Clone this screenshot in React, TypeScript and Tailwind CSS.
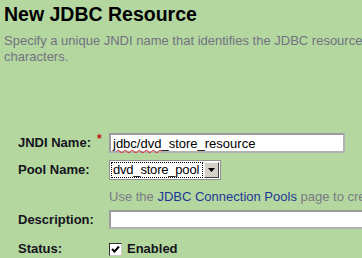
import React from 'react';

const font = { fontFamily: '"Liberation Sans", Arial, sans-serif' };

const Label = ({ children, required }: { children: React.ReactNode; required?: boolean }) => (
  <div className="relative w-[91px] shrink-0 text-[13px] font-bold text-[#14141c]">
    {children}
    {required && (
      <span className="absolute left-[79px] top-[-3px] text-[12px] font-bold text-[#c41010]">*</span>
    )}
  </div>
);

const NewJdbcResource = () => {
  return (
    <div className="w-[362px] h-[258px] overflow-hidden bg-[#b4d7a0]" style={font}>
      {/* Header */}
      <div className="pl-[4px] pt-[3px]">
        <h1 className="text-[19.5px] leading-[23px] font-bold text-black whitespace-nowrap">New JDBC Resource</h1>
        <div className="mt-[7px] text-[13px] leading-[16px] text-[#727280] whitespace-nowrap">
          <div>
            Specify a unique JNDI name that identifies the JDBC resource you want to create. The name must
            contain only alphanumeric, underscore, dash, or dot
          </div>
          <div>characters.</div>
        </div>
      </div>

      {/* Form */}
      <div className="pl-[18px] mt-[68px] flex flex-col">
        <div className="flex items-center h-[20px]">
          <Label required>JNDI Name:</Label>
          <div className="w-[236px] h-[20px] bg-white border-2 border-[#b2b2b2] border-t-[#9c9c9c] border-l-[#9c9c9c] flex items-center pl-[2px] text-[13px] leading-[15px] text-black whitespace-nowrap">
            <span style={{ textDecoration: 'underline wavy #e02020', textDecorationThickness: '1px' }}>jdbc/dvd</span>
            <span>_store_resource</span>
          </div>
        </div>

        <div className="flex items-center h-[20px] mt-[7px]">
          <Label>Pool Name:</Label>
          <div className="w-[112px] h-[20px] bg-white border border-[#8f8f8f] flex items-stretch p-[1px]">
            <div className="flex-1 border border-dotted border-black flex items-center pl-[1px] text-[13px] text-black whitespace-nowrap overflow-hidden tracking-[-0.2px]">
              dvd_store_pool
            </div>
            <div className="w-[15px] ml-[1px] bg-[#d4d0c8] border border-[#f4f4f4] border-r-[#404040] border-b-[#404040] flex items-center justify-center">
              <svg width="7" height="4" viewBox="0 0 7 4">
                <path d="M0 0H7L3.5 4Z" fill="#000" />
              </svg>
            </div>
          </div>
        </div>

        <div className="pl-[91px] mt-[9px] text-[13px] leading-[16px] text-[#7a7a84] whitespace-nowrap">
          Use the <span className="text-[#1c3796]">JDBC Connection Pools</span> page to create new pools
        </div>

        <div className="flex items-center h-[19px] mt-[5px]">
          <Label>Description:</Label>
          <div className="w-[280px] h-[19px] shrink-0 bg-white border-2 border-[#b2b2b2] border-t-[#9c9c9c] border-l-[#9c9c9c]" />
        </div>

        <div className="flex items-center h-[16px] mt-[12px]">
          <Label>Status:</Label>
          <div className="flex items-center gap-[5px]">
            <div className="w-[13px] h-[13px] bg-white border border-[#303030] border-r-[#c8c8c8] border-b-[#c8c8c8] flex items-center justify-center">
              <svg width="9" height="9" viewBox="0 0 9 9">
                <path d="M1 4L3.5 6.5L8 1.5" stroke="#000" strokeWidth="2" fill="none" />
              </svg>
            </div>
            <span className="text-[13px] font-bold text-[#14141c]">Enabled</span>
          </div>
        </div>
      </div>
    </div>
  );
};

export default NewJdbcResource;
